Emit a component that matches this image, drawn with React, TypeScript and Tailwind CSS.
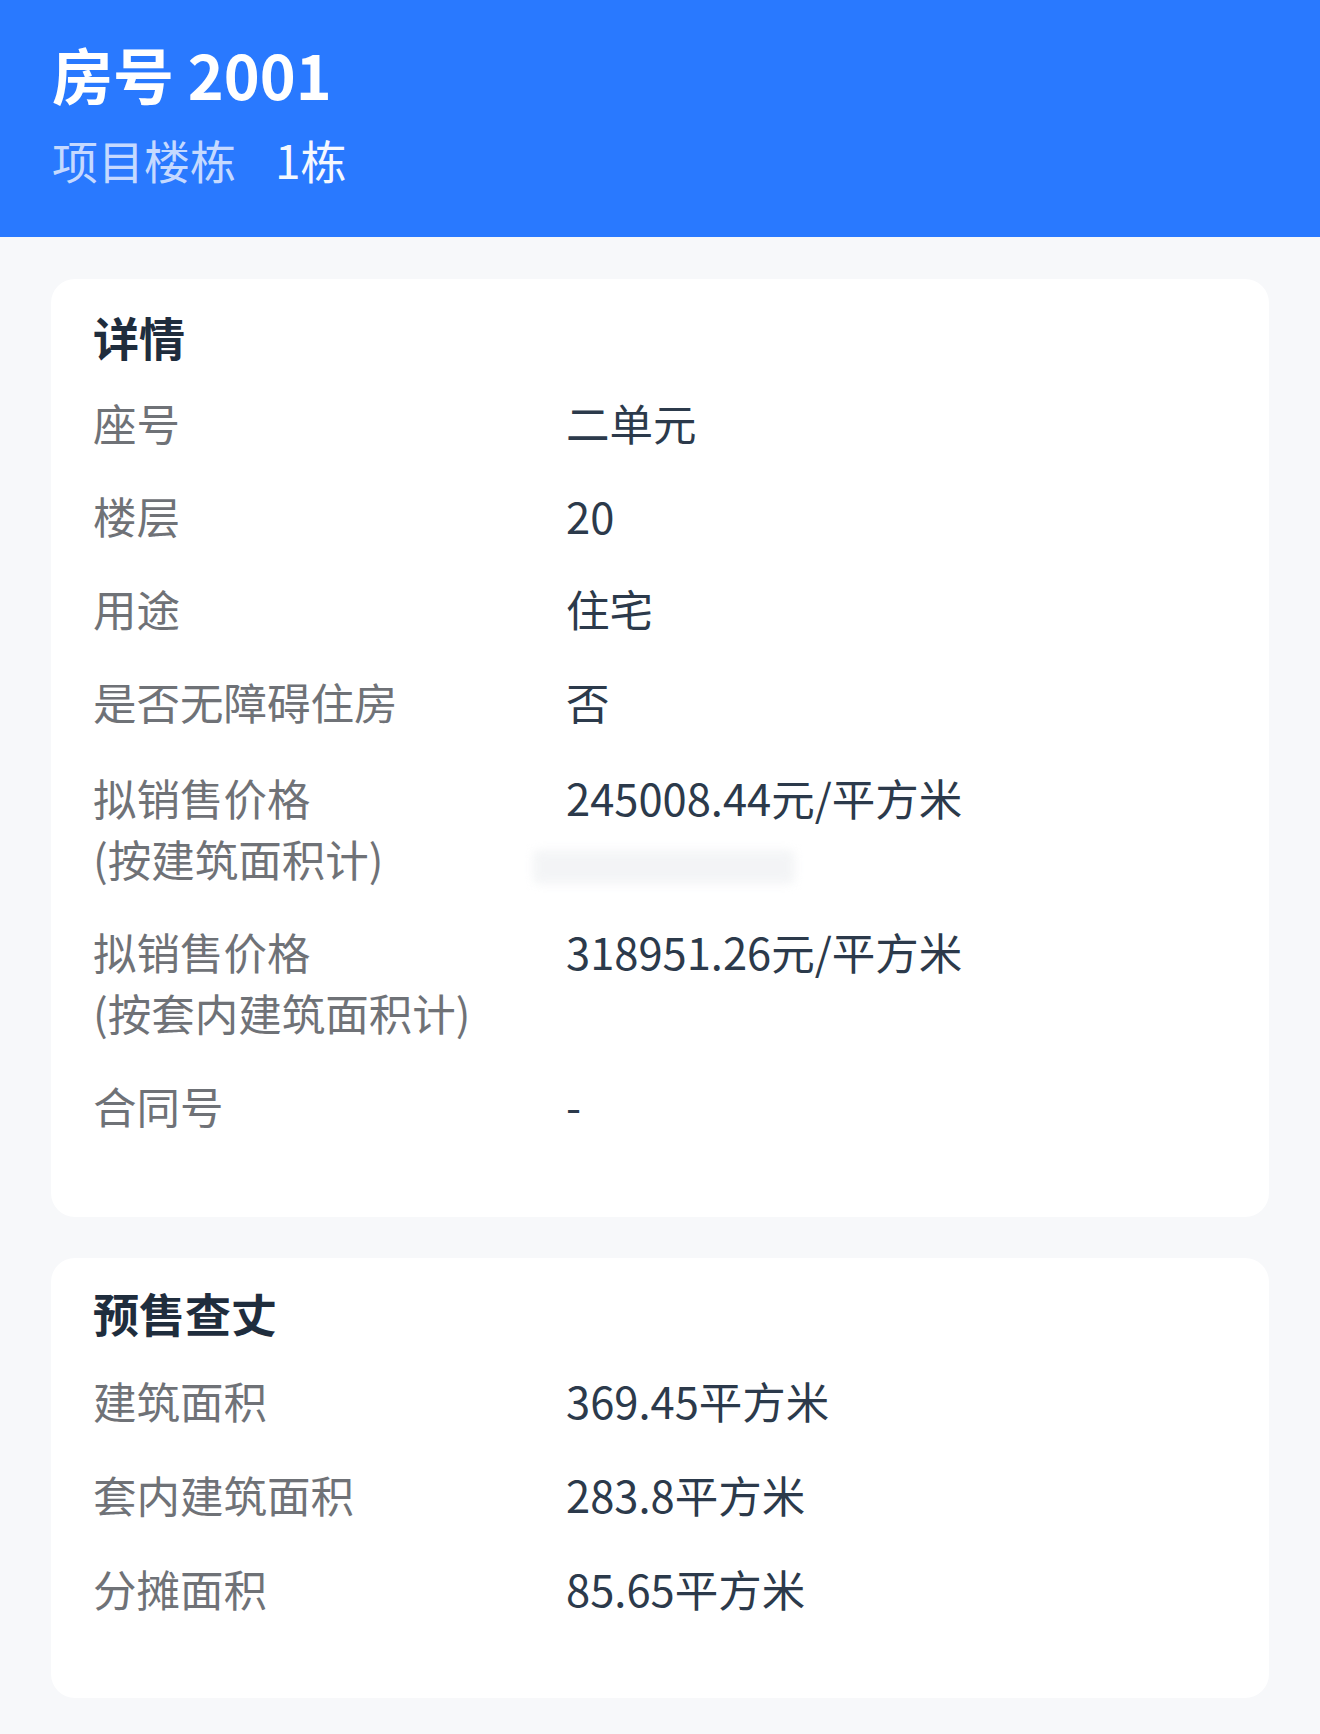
import React from "react";

const FONT = { fontFamily: '"Noto Sans CJK SC", "Noto Sans", sans-serif' };

type Row = { label: string[]; value: string };

const details: Row[] = [
  { label: ["座号"], value: "二单元" },
  { label: ["楼层"], value: "20" },
  { label: ["用途"], value: "住宅" },
  { label: ["是否无障碍住房"], value: "否" },
  { label: ["拟销售价格", "(按建筑面积计)"], value: "245008.44元/平方米" },
  { label: ["拟销售价格", "(按套内建筑面积计)"], value: "318951.26元/平方米" },
  { label: ["合同号"], value: "-" },
];

const survey: Row[] = [
  { label: ["建筑面积"], value: "369.45平方米" },
  { label: ["套内建筑面积"], value: "283.8平方米" },
  { label: ["分摊面积"], value: "85.65平方米" },
];

function RowView({ r, extraTop }: { r: Row; extraTop?: boolean }) {
  return (
    <div
      className={
        extraTop
          ? "mt-[3px] grid grid-cols-[473px_1fr] text-[43.5px] leading-[61px]"
          : "grid grid-cols-[473px_1fr] text-[43.5px] leading-[61px]"
      }
    >
      <div className="text-[#6f7277]">
        {r.label.map((l, j) => (
          <div key={j}>{l}</div>
        ))}
      </div>
      <div className="text-[#2c3a4b]">{r.value}</div>
    </div>
  );
}

export default function App() {
  return (
    <div className="min-h-screen w-[1320px] bg-[#f7f8fa]" style={FONT}>
      <div className="bg-[#2979ff] pl-[52px] pt-[38px] pb-[50px]">
        <div className="text-[61px] font-bold leading-[72px] text-white">房号 2001</div>
        <div className="mt-[21px] flex gap-[39px] text-[46px] leading-[56px]">
          <span className="text-[#c5d9ff]">项目楼栋</span>
          <span className="text-[#f4f8ff]">1栋</span>
        </div>
      </div>
      <div className="flex flex-col gap-[41px] px-[51px] pt-[42px] pb-[37px]">
        <div className="relative rounded-[24px] bg-white px-[42px] pt-[27px] pb-[81px]">
          <div className="text-[46px] font-bold leading-[60px] text-[#1f2d3d]">详情</div>
          <div className="mt-[26px] flex flex-col gap-[32px]">
            {details.map((r, i) => (
              <RowView key={i} r={r} extraTop={i === 4} />
            ))}
          </div>
          <div className="pointer-events-none absolute left-[482px] top-[571px] h-[34px] w-[262px] rounded-[6px] bg-[#eceef1] opacity-60 blur-[5px]" />
        </div>
        <div className="rounded-[24px] bg-white px-[42px] pt-[24px] pb-[79px]">
          <div className="text-[46px] font-bold leading-[60px] text-[#1f2d3d]">预售查丈</div>
          <div className="mt-[28px] flex flex-col gap-[33px]">
            {survey.map((r, i) => (
              <RowView key={i} r={r} />
            ))}
          </div>
        </div>
      </div>
    </div>
  );
}
